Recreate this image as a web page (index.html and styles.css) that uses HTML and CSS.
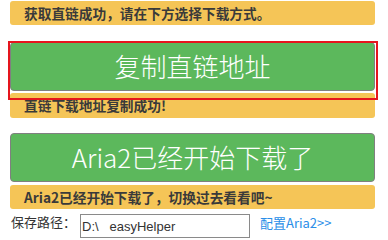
FILE: index.html
```html
<!DOCTYPE html>
<html lang="zh-CN">
<head>
<meta charset="utf-8">
<title>easyHelper</title>
<link rel="stylesheet" href="styles.css">
</head>
<body>
<div class="wrap">
  <div class="notice n1">获取直链成功，请在下方选择下载方式。</div>
  <div class="btn-box">
    <div class="btn">复制直链地址</div>
    <div class="highlight"></div>
  </div>
  <div class="notice n2">直链下载地址复制成功!</div>
  <div class="btn btn2">Aria2已经开始下载了</div>
  <div class="notice n3">Aria2已经开始下载了，切换过去看看吧~</div>
  <div class="row">
    <span class="label">保存路径：</span>
    <input class="path" type="text" value="D:\   easyHelper">
    <a class="link" href="#">配置Aria2&gt;&gt;</a>
  </div>
</div>
</body>
</html>
```
FILE: styles.css
```css
html, body {
  margin: 0;
  padding: 0;
  background: #ffffff;
  overflow: hidden;
}
body {
  font-family: "Noto Sans CJK SC", "Noto Sans", sans-serif;
  color: #333333;
}
.wrap {
  width: 365px;
  padding: 1px 0 0 10px;
  display: flex;
  flex-direction: column;
}
.notice {
  box-sizing: border-box;
  height: 24px;
  background: #f5c557;
  border-radius: 3px;
  padding-left: 14px;
  font-size: 13.7px;
  font-weight: bold;
  line-height: 24px;
  color: #3a3a3a;
  white-space: nowrap;
}
.n2 {
  margin-top: 2px;
  height: 25px;
}
.n3 {
  margin-top: 3px;
}
.btn-box {
  position: relative;
  margin-top: 17px;
}
.btn {
  box-sizing: border-box;
  height: 49px;
  background: #5cb85c;
  border: 1px solid #808080;
  border-radius: 4px;
  color: #ffffff;
  font-size: 26px;
  font-weight: 300;
  line-height: 46px;
  text-align: center;
  white-space: nowrap;
}
.btn2 {
  margin-top: 15px;
}
.highlight {
  position: absolute;
  left: -2px;
  top: -1px;
  width: 370px;
  height: 59px;
  box-sizing: border-box;
  border: 2px solid #e5151d;
  z-index: 2;
}
.row {
  margin-top: 3px;
  display: flex;
  align-items: flex-start;
  height: 30px;
}
.label {
  margin-left: 1px;
  font-size: 13px;
  line-height: 18px;
  color: #333333;
  margin-top: 1px;
}
.path {
  box-sizing: border-box;
  margin: 2px 0 0 4px;
  width: 170px;
  height: 24px;
  border: 1px solid #8a8a8a;
  padding: 0 1px;
  font-family: "Liberation Sans", Arial, sans-serif;
  font-size: 13px;
  color: #333333;
  background: #ffffff;
  outline: none;
}
.link {
  margin: 2px 0 0 10px;
  font-size: 13px;
  line-height: 18px;
  color: #2a8ee8;
  text-decoration: none;
}
```
